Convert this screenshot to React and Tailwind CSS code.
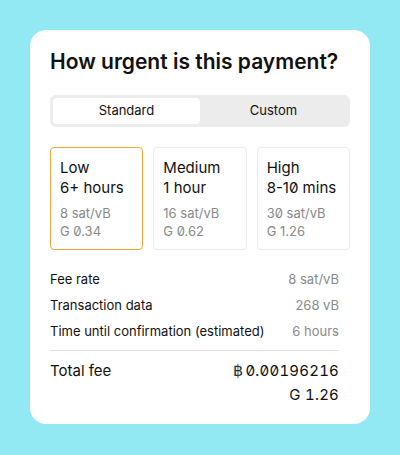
import React, { useState } from 'react';

const tiers = [
    { name: 'Low', time: '6+ hours', rate: '8 sat/vB', fiat: 'G 0.34' },
    { name: 'Medium', time: '1 hour', rate: '16 sat/vB', fiat: 'G 0.62' },
    { name: 'High', time: '8-10 mins', rate: '30 sat/vB', fiat: 'G 1.26' }
];

const details = [
    { label: 'Fee rate', value: '8 sat/vB' },
    { label: 'Transaction data', value: '268 vB' },
    { label: 'Time until confirmation (estimated)', value: '6 hours' }
];

const App = () => {
    const [tab, setTab] = useState('Standard');
    const [tier, setTier] = useState(0);

    return (
        <div className="min-h-[455px] w-full bg-[#93e9f3] p-[30px] font-['Inter','Liberation_Sans',sans-serif] text-[#111] [font-feature-settings:'zero']">
            <div className="w-[340px] rounded-[16px] bg-white px-5 pt-[19px] pb-[17px]">
                <h1 className="text-[21px] leading-[26px] font-semibold">How urgent is this payment?</h1>

                {/* segmented control */}
                <div className="mt-[20px] flex h-[32px] rounded-[6px] bg-[#ececec] p-[3px] text-[13px]">
                    {['Standard', 'Custom'].map((t) => (
                        <button
                            key={t}
                            onClick={() => setTab(t)}
                            className={t === tab ? 'flex-1 rounded-[4px] bg-white' : 'flex-1 rounded-[4px]'}
                        >
                            {t}
                        </button>
                    ))}
                </div>

                {/* tier cards */}
                <div className="mt-[20px] grid grid-cols-3 gap-[10px]">
                    {tiers.map((t, i) => (
                        <div
                            key={t.name}
                            onClick={() => setTier(i)}
                            className={
                                i === tier
                                    ? 'h-[103px] rounded-[4px] border border-[#f5a53a] px-[9px] pt-[10px]'
                                    : 'h-[103px] rounded-[4px] border border-[#ececec] px-[9px] pt-[10px]'
                            }
                        >
                            <p className="text-[15px] leading-[20px]">{t.name}</p>
                            <p className="text-[15px] leading-[20px]">{t.time}</p>
                            <p className="mt-[6px] text-[13px] leading-[18px] text-[#8a8a8a]">{t.rate}</p>
                            <p className="text-[13px] leading-[18px] text-[#8a8a8a]">{t.fiat}</p>
                        </div>
                    ))}
                </div>

                <div className="pr-[11px]">
                    {/* fee breakdown */}
                    <div className="mt-[20px] flex flex-col gap-[8px] text-[13px] leading-[18px]">
                        {details.map((d) => (
                            <div key={d.label} className="flex justify-between">
                                <span>{d.label}</span>
                                <span className="text-[#8a8a8a]">{d.value}</span>
                            </div>
                        ))}
                    </div>

                    <div className="mt-[10px] border-t border-[#e2e2e2]" />

                    <div className="mt-[8px] flex justify-between text-[15px] leading-[24px]">
                        <span>Total fee</span>
                        <div className="text-right tabular-nums tracking-[0.2px]">
                            <p>
                                <span className="mr-[2px] font-['DejaVu_Sans',sans-serif] text-[16px] text-[#333]">฿</span>
                                0.00196216
                            </p>
                            <p>G 1.26</p>
                        </div>
                    </div>
                </div>
            </div>
        </div>
    );
};

export default App;
